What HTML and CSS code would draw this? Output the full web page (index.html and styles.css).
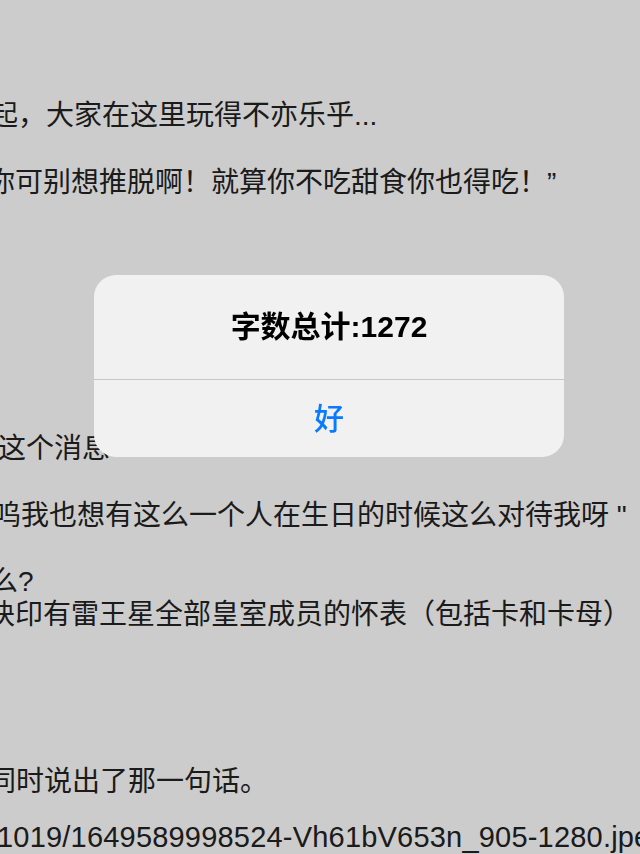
FILE: index.html
```html
<!DOCTYPE html>
<html lang="zh-CN">
<head>
    <meta charset="UTF-8">
    <meta name="viewport" content="width=device-width, initial-scale=1.0">
    <title>字数统计</title>
    <link rel="stylesheet" href="styles.css">
</head>
<body>
    <div class="reader">
        <p class="line shift-3">起，大家在这里玩得不亦乐乎...</p>
        <div class="gap-1"></div>
        <p class="line">你可别想推脱啊！就算你不吃甜食你也得吃！”</p>
        <div class="gap-7"></div>
        <p class="line shift-11">这个消息</p>
        <div class="gap-1"></div>
        <p class="line shift-6">呜我也想有这么一个人在生日的时候这么对待我呀 "</p>
        <div class="gap-1"></div>
        <p class="line shift-3">么?</p>
        <p class="line">块印有雷王星全部皇室成员的怀表（包括卡和卡母）</p>
        <div class="gap-4"></div>
        <p class="line shift-1">同时说出了那一句话。</p>
        <div class="gap-1"></div>
        <p class="line url shift-10">1019/1649589998524-Vh61bV653n_905-1280.jpeg</p>
    </div>

    <div class="dim"></div>

    <div class="alert">
        <div class="alert-title">字数总计:1272</div>
        <div class="alert-btn">好</div>
    </div>
</body>
</html>
```

FILE: styles.css
```css
/* Page */
body {
    margin: 0;
    background-color: #ffffff;
    color: #222222;
    font-family: "Liberation Sans", "Noto Sans CJK SC", sans-serif;
    overflow: hidden;
    height: 854px;
}

/* Reader text, scrolled a little to the left */
.reader {
    margin-left: -13px;
    padding-top: 99px;
    font-size: 28px;
    line-height: 33.3px;
    white-space: nowrap;
}

.line {
    margin: 0;
    height: 33.3px;
}

.shift-1 { padding-left: 1px; }
.shift-3 { padding-left: 3px; }
.shift-6 { padding-left: 6px; }
.shift-10 { padding-left: 10px; }
.shift-11 { padding-left: 11px; }

.gap-1 { height: 33.3px; }
.gap-4 { height: 133.2px; }
.gap-7 { height: 233.1px; }

.url {
    font-size: 29px;
    margin-top: -11px;
    letter-spacing: 0.2px;
}

/* Alert backdrop */
.dim {
    position: fixed;
    top: 0;
    left: 0;
    right: 0;
    bottom: 0;
    background-color: rgba(0, 0, 0, 0.2);
}

/* Alert */
.alert {
    position: absolute;
    top: 275px;
    left: 94px;
    width: 470px;
    background-color: #f1f1f1;
    border-radius: 22px;
    overflow: hidden;
}

.alert-title {
    height: 104px;
    display: flex;
    align-items: center;
    justify-content: center;
    font-size: 30px;
    font-weight: bold;
    line-height: 1;
    color: #000000;
    border-bottom: 1px solid #c6c6c6;
}

.alert-btn {
    height: 77px;
    display: flex;
    align-items: center;
    justify-content: center;
    font-size: 30px;
    font-weight: 500;
    line-height: 1;
    color: #0a7aff;
}
```
